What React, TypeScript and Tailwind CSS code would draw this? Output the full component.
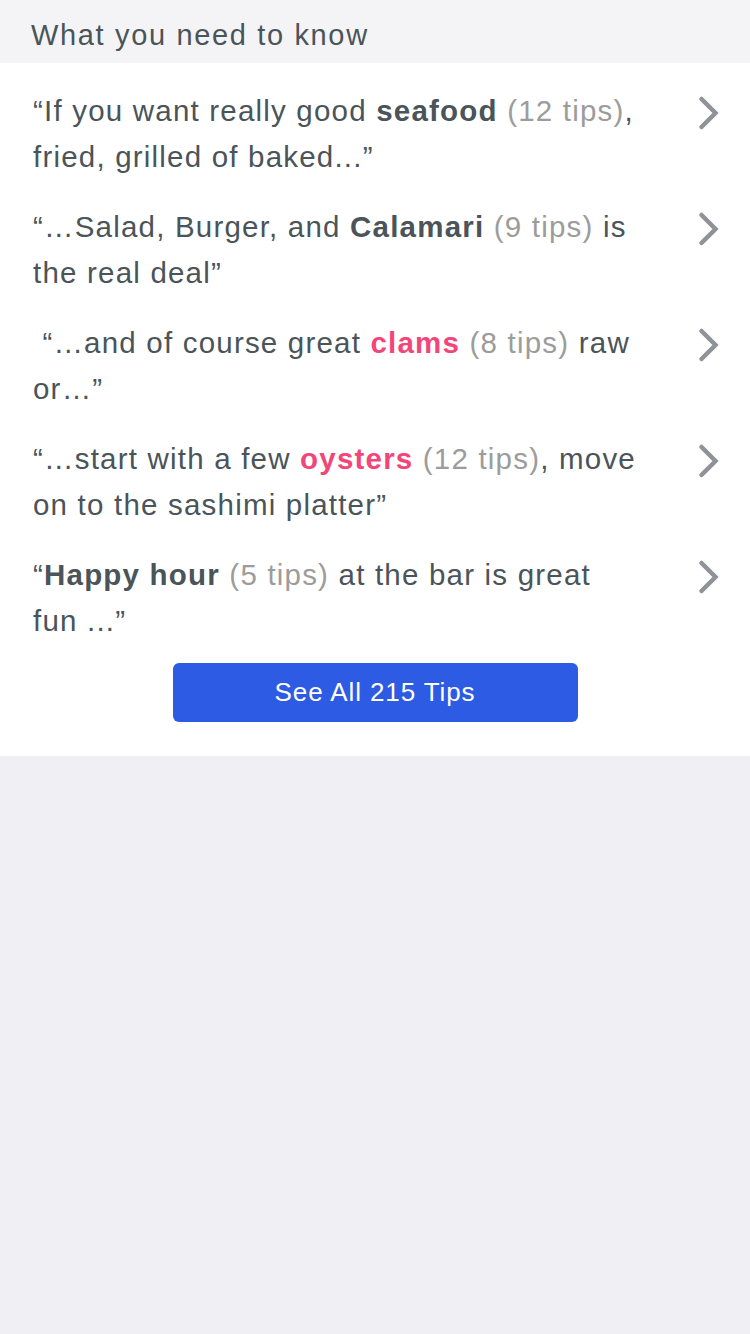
const dark = "text-[#4a5459]";

function Chevron() {
  return (
    <svg width="26" height="38" viewBox="0 0 26 38" className="shrink-0">
      <path d="M5.5 5 L19.5 19 L5.5 33" fill="none" stroke="#8f9398" strokeWidth="4.5" strokeLinecap="round" strokeLinejoin="miter" />
    </svg>
  );
}

function Tips({ n }: { n: number }) {
  return <span className="text-[#9c9c9c]">({n} tips)</span>;
}

function Row({ children }: { children: React.ReactNode }) {
  return (
    <div className="flex items-start justify-between pl-[33px] pr-[28px]">
      <p className={`text-[29.5px] leading-[46px] tracking-[1.2px] whitespace-nowrap ${dark}`}>{children}</p>
      <div className="pt-[6px]">
        <Chevron />
      </div>
    </div>
  );
}

export default function App() {
  return (
    <div className="min-h-[1334px] bg-[#efeff4] font-['Liberation_Sans',Arial,sans-serif]">
      <div className="h-[63px] bg-[#f4f4f6] pl-[31px] pt-[14px]">
        <h2 className={`text-[29px] leading-[42px] tracking-[1.65px] ${dark}`}>What you need to know</h2>
      </div>
      <div className="bg-white pt-[25px] pb-[34px]">
        <div className="flex flex-col gap-[24px]">
          <Row>
            “If you want really good <b>seafood</b> <Tips n={12} />,<br />
            fried, grilled of baked...”
          </Row>
          <Row>
            “…Salad, Burger, and <b>Calamari</b> <Tips n={9} /> is<br />
            the real deal”
          </Row>
          <Row>
            &nbsp;“…and of course great <b className="text-[#f2467b]">clams</b> <Tips n={8} /> raw<br />
            or…”
          </Row>
          <Row>
            “…start with a few <b className="text-[#f2467b]">oysters</b> <Tips n={12} />, move<br />
            on to the sashimi platter”
          </Row>
          <Row>
            “<b>Happy hour</b> <Tips n={5} /> at the bar is great<br />
            fun ...”
          </Row>
        </div>
        <div className="mt-[19px] flex justify-center">
          <button className="h-[59px] w-[405px] rounded-[6px] bg-[#2d5be3] text-[26px] tracking-[0.9px] text-white">
            See All 215 Tips
          </button>
        </div>
      </div>
    </div>
  );
}
